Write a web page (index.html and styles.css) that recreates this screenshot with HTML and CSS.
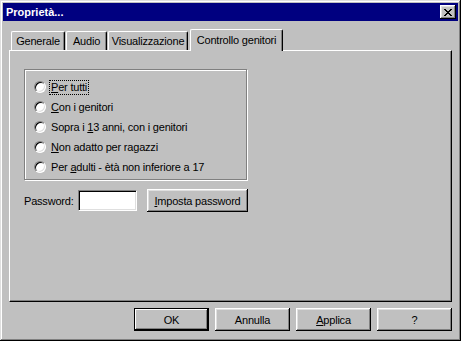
FILE: index.html
```html
<html>
<head>
    <meta charset="utf-8">
    <title>Proprietà...</title>
    <link rel="stylesheet" href="styles.css">
</head>
<body>
    <div class="window">
        <div class="titlebar">
            <span class="title">Proprietà...</span>
            <span class="close">
                <svg width="8" height="7" viewBox="0 0 8 7" shape-rendering="crispEdges">
                    <path d="M0 0h2v1h-2zM6 0h2v1h-2zM1 1h2v1h-2zM5 1h2v1h-2zM2 2h4v1h-4zM3 3h2v1h-2zM2 4h4v1h-4zM1 5h2v1h-2zM5 5h2v1h-2zM0 6h2v1h-2zM6 6h2v1h-2z" fill="#000"/>
                </svg>
            </span>
        </div>

        <div class="content">
            <div class="tabs">
                <div class="tab tab-general">Generale</div>
                <div class="tab tab-audio">Audio</div>
                <div class="tab tab-display">Visualizzazione</div>
                <div class="tab tab-parental active">Controllo genitori</div>
            </div>

            <div class="panel">
                <div class="group">
                    <div class="option"><span class="radio"></span><span class="label focus"><u>P</u>er tutti</span></div>
                    <div class="option"><span class="radio"></span><span class="label"><u>C</u>on i genitori</span></div>
                    <div class="option"><span class="radio"></span><span class="label">Sopra i <u>1</u>3 anni, con i genitori</span></div>
                    <div class="option"><span class="radio"></span><span class="label"><u>N</u>on adatto per ragazzi</span></div>
                    <div class="option"><span class="radio"></span><span class="label">Per <u>a</u>dulti - ètà non inferiore a 17</span></div>
                </div>

                <div class="pwd-row">
                    <span class="pwd-label">Password:</span>
                    <span class="field"></span>
                    <span class="btn btn-wide"><u>I</u>mposta password</span>
                </div>
            </div>

            <div class="actions">
                <span class="btn btn-default">OK</span>
                <span class="btn">Annulla</span>
                <span class="btn"><u>A</u>pplica</span>
                <span class="btn">?</span>
            </div>
        </div>
    </div>
</body>
</html>
```

FILE: styles.css
```css
* {box-sizing:border-box;}
body {margin:0;background:#c0c0c0;font-family:"Liberation Sans", Arial, sans-serif;font-size:11px;letter-spacing:-0.2px;color:#000;}
u {text-decoration:underline;text-underline-offset:1px;}

.window {width:461px;height:341px;padding:3px;background:#c0c0c0;
    box-shadow:inset -1px -1px #000, inset 1px 1px #dfdfdf, inset -2px -2px #808080, inset 2px 2px #fff;}

.titlebar {height:18px;background:#000080;display:flex;align-items:center;justify-content:space-between;padding:0 2px 0 3px;}
.title {color:#fff;font-weight:bold;font-size:11px;letter-spacing:0;}
.close {width:16px;height:14px;background:#c0c0c0;display:flex;align-items:center;justify-content:center;
    box-shadow:inset -1px -1px #000, inset 1px 1px #fff, inset -2px -2px #808080, inset 2px 2px #dfdfdf;}

.content {padding:8px 6px 0 6px;}

.tabs {display:flex;align-items:flex-end;height:21px;padding-left:2px;}
.tab {height:19px;padding-top:3px;margin-right:1px;white-space:nowrap;text-align:center;
    border-top:1px solid #fff;border-left:1px solid #fff;border-right:1px solid #000;border-radius:2px 2px 0 0;
    box-shadow:inset -1px 0 #808080;}
.tab-general {width:54px;}
.tab-audio {width:41px;}
.tab-display {width:80px;}
.tab-parental {width:93px;}
.tab.active {height:22px;margin-bottom:-1px;margin-left:1px;padding-top:4px;position:relative;z-index:1;background:#c0c0c0;}

.panel {height:252px;padding:18px 0 0 14px;border-top:1px solid #fff;border-left:1px solid #fff;border-right:1px solid #000;border-bottom:1px solid #000;
    box-shadow:inset -1px -1px #808080;}

.group {width:223px;height:111px;padding:7px 0 0 9px;border:1px solid #808080;
    box-shadow:1px 1px #fff, inset 1px 1px #fff;}
.option {height:20px;display:flex;align-items:center;}
.radio {width:12px;height:12px;border-radius:50%;background:#fff;margin-right:4px;
    border:1px solid;border-color:#808080 #fff #fff #808080;
    box-shadow:inset 1px 1px #000, inset -1px -1px #dfdfdf;}
.label {padding:0 1px;white-space:nowrap;line-height:13px;}
.focus {outline:1px dotted #000;}

.pwd-row {display:flex;align-items:center;margin-top:9px;height:23px;}
.pwd-label {width:54px;}
.field {width:59px;height:21px;background:#fff;border:1px solid;border-color:#808080 #fff #fff #808080;
    box-shadow:inset 1px 1px #000, inset -1px -1px #dfdfdf;}

.btn {display:flex;align-items:center;justify-content:center;width:75px;height:23px;background:#c0c0c0;white-space:nowrap;
    box-shadow:inset -1px -1px #000, inset 1px 1px #fff, inset -2px -2px #808080, inset 2px 2px #dfdfdf;}
.btn-wide {width:101px;margin-left:10px;}
.btn-default {border:1px solid #000;box-shadow:inset -1px -1px #000, inset 1px 1px #fff, inset -2px -2px #808080;}

.actions {display:flex;justify-content:flex-end;gap:6px;margin-top:6px;}
```
